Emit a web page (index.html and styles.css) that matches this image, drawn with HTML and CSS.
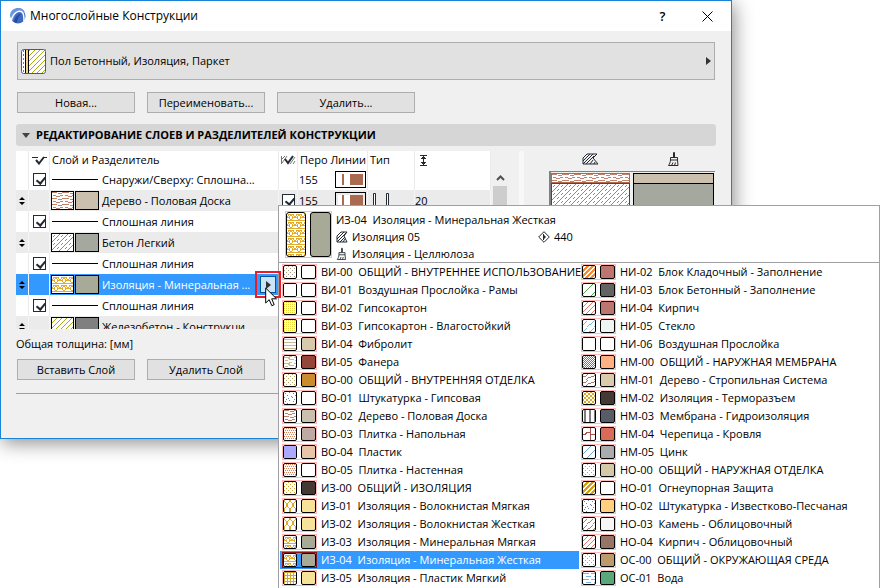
FILE: index.html
```html
<!DOCTYPE html>
<html lang="ru">
<head>
  <meta charset="UTF-8">
  <meta name="viewport" content="width=device-width, initial-scale=1.0">
  <title>Многослойные Конструкции</title>
  <link rel="stylesheet" href="styles.css">
</head>
<body>
  <!-- Штриховки и значки -->
  <svg class="defs" aria-hidden="true">
    <defs>
      <pattern id="dots-grey" width="4" height="4" patternUnits="userSpaceOnUse"><path d="M0 .5h1M2 2.5h1" stroke="#a39a8a"/></pattern>
      <pattern id="dots-yellow" width="2" height="2" patternUnits="userSpaceOnUse"><path d="M0 .5h1" stroke="#ecd83c"/></pattern>
      <pattern id="dots-tan" width="4" height="4" patternUnits="userSpaceOnUse"><path d="M0 .5h1M2 2.5h1" stroke="#b5a468"/></pattern>
      <pattern id="dots-orange" width="4" height="4" patternUnits="userSpaceOnUse"><path d="M0 .5h1M2 .5h1M1 2.5h1M3 2.5h1" stroke="#dd8058"/></pattern>
      <pattern id="dots-ochre" width="4" height="4" patternUnits="userSpaceOnUse"><path d="M0 .5h1M2 2.5h1" stroke="#cfa12a"/></pattern>
      <pattern id="sand-blue" width="8" height="8" patternUnits="userSpaceOnUse"><path d="M1 1.5h1M5 .5h1M3 3.5h1M7 4.5h1M0 5.5h1M4 6.5h1M2 7.5h1" stroke="#6a7fc0"/></pattern>
      <pattern id="lines-tan" width="4" height="3" patternUnits="userSpaceOnUse"><path d="M0 1.5h4" stroke="#c9bb93"/></pattern>
      <pattern id="ply" width="10" height="6" patternUnits="userSpaceOnUse"><path d="M0 1.5h4l2 2h4M6 .5h2M1 4.5h3M5 0v2" fill="none" stroke="#c9b98c"/></pattern>
      <pattern id="wood" width="12" height="6" patternUnits="userSpaceOnUse"><path d="M0 .5h5M6 1.5h4M10 .5h2M1 3.5h3M4 4.5h4M8 3.5h3" stroke="#c0826b"/></pattern>
      <pattern id="timber" width="8" height="6" patternUnits="userSpaceOnUse"><path d="M0 2.5h2l3-2M3 5.5l3-2h2" fill="none" stroke="#b07a5c"/></pattern>
      <pattern id="zigzag" width="6" height="10" patternUnits="userSpaceOnUse"><path d="M0 0l3 5 3-5M0 10l3-5 3 5" fill="none" stroke="#dba82a"/></pattern>
      <pattern id="batt" width="8" height="8" patternUnits="userSpaceOnUse"><path d="M0 4.5l2-3h4l2 3M0 7.5h8M2 4.5l2-3 2 3-2 3z" fill="none" stroke="#e2ab2c"/></pattern>
      <pattern id="grid-ochre" width="3" height="3" patternUnits="userSpaceOnUse"><path d="M0 .5h3M.5 0v3" stroke="#d6a72b"/></pattern>
      <pattern id="cross-ochre" width="4" height="4" patternUnits="userSpaceOnUse"><path d="M0 0l4 4M4 0l-4 4" stroke="#dba82a"/></pattern>
      <pattern id="check-maroon" width="2" height="2" patternUnits="userSpaceOnUse"><path d="M0 .5h1M1 1.5h1" stroke="#a86464"/></pattern>
      <pattern id="hatch-orange" width="5" height="5" patternUnits="userSpaceOnUse"><path d="M-1 6l7-7M-1 1l2-2M4 6l2-2" stroke="#f58a35" stroke-width="2"/></pattern>
      <pattern id="hatch-red" width="5" height="5" patternUnits="userSpaceOnUse"><path d="M-1 6l7-7M-1 1l2-2M4 6l2-2" stroke="#ec7468"/></pattern>
      <pattern id="hatch-ochre" width="5" height="5" patternUnits="userSpaceOnUse"><path d="M-1 6l7-7M-1 1l2-2M4 6l2-2" stroke="#d69d10" stroke-width="1.5"/></pattern>
      <pattern id="hatch-olive" width="5" height="5" patternUnits="userSpaceOnUse"><path d="M-1 6l7-7M-1 1l2-2M4 6l2-2" stroke="#a8aa10"/></pattern>
      <pattern id="hatch-green" width="10" height="10" patternUnits="userSpaceOnUse"><path d="M-1 11l12-12M-1 1l2-2M9 11l2-2" stroke="#4ba63f"/></pattern>
      <pattern id="hatch-blue" width="8" height="8" patternUnits="userSpaceOnUse"><path d="M-1 9l10-10M-1 1l2-2M7 9l2-2" stroke="#6aa8dc"/></pattern>
      <pattern id="dash-cyan" width="7" height="7" patternUnits="userSpaceOnUse"><path d="M0 5l4-4M4 7l3-3" stroke="#6fc3ea"/></pattern>
      <pattern id="dash-tan" width="6" height="6" patternUnits="userSpaceOnUse"><path d="M0 5l4-4M3 7l3-3" stroke="#a2875c"/></pattern>
      <pattern id="concrete" width="8" height="8" patternUnits="userSpaceOnUse"><path d="M0 8l8-8M1 3l2-2M5 7l2-2" stroke="#55b43e"/></pattern>
      <pattern id="bars-grey" width="5" height="8" patternUnits="userSpaceOnUse"><path d="M2 0v8" stroke="#7e7e7e" stroke-width="2"/></pattern>
      <pattern id="tile" width="12" height="12" patternUnits="userSpaceOnUse"><path d="M0 6.5h2l2-2h3l1 2h4M7.5 0v12" fill="none" stroke="#a84f4f"/></pattern>
      <pattern id="water" width="8" height="6" patternUnits="userSpaceOnUse"><path d="M0 1.5h6M3 4.5h5" stroke="#7ab2de"/></pattern>
      <pattern id="lilac" width="4" height="4" patternUnits="userSpaceOnUse"><path d="M0 0h4v4H0z" fill="#aaaaff"/></pattern>
      <pattern id="empty" width="4" height="4" patternUnits="userSpaceOnUse"><path d="M0 0h4v4H0z" fill="#fff"/></pattern>

      <symbol id="icon-hatch" viewBox="0 0 17 12">
        <path d="M1 11V5l4-4h10l-4 4 5 6z" fill="none" stroke="#222b33"/>
        <path d="M1 8l7-7M1 11L11 1M4 11l8-8M8 11l3-4M12 11l1-2" stroke="#222b33"/>
      </symbol>
      <symbol id="icon-brush" viewBox="0 0 12 15">
        <path d="M5.500 6V1.500h1V6M2.500 9V6.500h7V9zM2.500 9c0 2-1 4-2 5.500h9.500l-.5-5.500M3.500 14.500l1.500-3M6.500 14.500l1-3" fill="none" stroke="#222b33"/>
      </symbol>
      <symbol id="icon-sort" viewBox="0 0 6 8">
        <path d="M3 0l3 3H0zM3 8L0 5h6z"/>
      </symbol>
    </defs>
  </svg>

  <div class="stage">
    <!-- Диалог Start -->
    <section class="dialog">
      <header class="titlebar">
        <svg class="logo" width="16" height="16" viewBox="0 0 16 16">
          <circle cx="8" cy="8" r="7.500" fill="#3e69c4"/>
          <path d="M0 8a8 8 0 0 1 15-4c-5-3-10 0-12 9z" fill="#6d93df"/>
          <path d="M1 13C3 5 8 2 12 4c2 1 2 5 2 9" fill="none" stroke="#fff" stroke-width="1.500"/>
          <path d="M4 14c1-5 4-8 7-8-2 2-4 5-4 9z" fill="#244ba0"/>
        </svg>
        <h1>Многослойные Конструкции</h1>
        <button class="win-btn" type="button" aria-label="Справка">?</button>
        <button class="win-btn" type="button" aria-label="Закрыть">
          <svg width="11" height="11" viewBox="0 0 11 11"><path d="M.5.5l10 10M10.500.5l-10 10" stroke="#000"/></svg>
        </button>
      </header>

      <div class="dialog-body">
        <button class="composite" type="button">
          <svg width="25" height="25" viewBox="0 0 25 25">
            <rect width="25" height="25" rx="2" fill="#fff"/>
            <rect x="8" width="17" height="25" fill="url(#hatch-olive)"/>
            <path d="M2.500 1v23" stroke="#4aa336" stroke-dasharray="2 2"/>
            <path d="M4.500 1v23M7.500 1v23" stroke="#000"/>
            <path d="M6 1v23" stroke="#dfa41b"/>
            <rect x=".5" y=".5" width="24" height="24" rx="2" fill="none" stroke="#3b5a9c"/>
          </svg>
          <span>Пол Бетонный, Изоляция, Паркет</span>
          <svg class="arrow" width="5" height="8" viewBox="0 0 5 8"><path d="M0 0l5 4-5 4z" fill="#333"/></svg>
        </button>

        <div class="actions">
          <button class="push" type="button">Новая...</button>
          <button class="push" type="button">Переименовать...</button>
          <button class="push push-wide" type="button">Удалить...</button>
        </div>

        <h2 class="section">
          <svg width="8" height="5" viewBox="0 0 8 5"><path d="M0 0h8L4 5z" fill="#444"/></svg>
          Редактирование слоев и разделителей конструкции
        </h2>

        <div class="editor">
          <div class="layers">
            <table>
              <colgroup>
                <col class="c-sort"><col class="c-check"><col class="c-name"><col class="c-core"><col class="c-pen"><col class="c-type"><col>
              </colgroup>
              <thead>
                <tr>
                  <th></th>
                  <th class="mid"><svg width="15" height="9" viewBox="0 0 15 9"><path d="M0 1.500h6M12 1.500h3" stroke="#222b33"/><path d="M4 4l3 3.500L12 1" fill="none" stroke="#222b33" stroke-width="2"/></svg></th>
                  <th class="pad">Слой и Разделитель</th>
                  <th class="mid"><svg width="15" height="10" viewBox="0 0 15 10"><path d="M.5 9V1M1 8l5-7M9 9l5-7M12 9l2-3M1 4l3-3" stroke="#777"/><path d="M4 4l3 4 5-7" fill="none" stroke="#222b33" stroke-width="2"/></svg></th>
                  <th class="pad">Перо Линии</th>
                  <th class="pad">Тип</th>
                  <th class="thick"><svg width="7" height="11" viewBox="0 0 7 11"><path d="M0 .5h7M0 10.500h7M3.500 1v9M1 3.500h5M1 7.500h5M2 2.500h3M2 8.500h3" stroke="#222b33"/></svg></th>
                </tr>
              </thead>
              <tbody>
                <tr>
                  <td></td>
                  <td class="mid"><input type="checkbox" aria-label="Снаружи/Сверху" checked></td>
                  <td><div class="cell"><i class="rule"></i><span>Снаружи/Сверху: Сплошна...</span></div></td>
                  <td></td>
                  <td><div class="cell"><span class="pen">155</span><i class="pen-box"></i></div></td>
                  <td></td>
                  <td></td>
                </tr>
                <tr class="layer">
                  <td class="mid"><svg width="6" height="8"><use href="#icon-sort"/></svg></td>
                  <td></td>
                  <td><div class="cell"><svg class="fill"><rect width="100%" height="100%" fill="url(#wood)"/></svg><i class="surface" style="background:#cbbfae"></i><span>Дерево - Половая Доска</span></div></td>
                  <td class="mid"><input type="checkbox" aria-label="Дерево - Половая Доска" checked></td>
                  <td><div class="cell"><span class="pen">155</span><i class="pen-box"></i></div></td>
                  <td><svg class="type" width="17" height="15" viewBox="0 0 17 15"><path d="M.5.5h2v14h-2zM13.500.5h2v14h-2z" fill="#fff" stroke="#222b33"/></svg></td>
                  <td>20</td>
                </tr>
                <tr>
                  <td></td>
                  <td class="mid"><input type="checkbox" aria-label="Разделитель 1" checked></td>
                  <td><div class="cell"><i class="rule"></i><span>Сплошная линия</span></div></td>
                  <td></td><td></td><td></td><td></td>
                </tr>
                <tr class="layer">
                  <td class="mid"><svg width="6" height="8"><use href="#icon-sort"/></svg></td>
                  <td></td>
                  <td><div class="cell"><svg class="fill"><rect width="100%" height="100%" fill="url(#concrete)"/></svg><i class="surface" style="background:#a5a89f"></i><span>Бетон Легкий</span></div></td>
                  <td></td><td></td><td></td><td></td>
                </tr>
                <tr>
                  <td></td>
                  <td class="mid"><input type="checkbox" aria-label="Разделитель 2" checked></td>
                  <td><div class="cell"><i class="rule"></i><span>Сплошная линия</span></div></td>
                  <td></td><td></td><td></td><td></td>
                </tr>
                <tr class="layer selected">
                  <td class="mid"><svg width="6" height="8"><use href="#icon-sort"/></svg></td>
                  <td></td>
                  <td><div class="cell"><svg class="fill"><rect width="100%" height="100%" fill="url(#batt)"/></svg><i class="surface" style="background:#a8aa98"></i><span>Изоляция - Минеральная ...</span></div></td>
                  <td></td><td></td><td></td><td></td>
                </tr>
                <tr>
                  <td></td>
                  <td class="mid"><input type="checkbox" aria-label="Разделитель 3" checked></td>
                  <td><div class="cell"><i class="rule"></i><span>Сплошная линия</span></div></td>
                  <td></td><td></td><td></td><td></td>
                </tr>
                <tr class="layer">
                  <td class="mid"><svg width="6" height="8"><use href="#icon-sort"/></svg></td>
                  <td></td>
                  <td><div class="cell"><svg class="fill"><rect width="100%" height="100%" fill="url(#hatch-olive)"/></svg><i class="surface" style="background:#808080"></i><span>Железобетон - Конструкци...</span></div></td>
                  <td></td><td></td><td></td><td></td>
                </tr>
              </tbody>
            </table>
          </div>
          <div class="scrollbar">
            <svg width="9" height="6" viewBox="0 0 9 6"><path d="M1 5l3.500-3.500L8 5" fill="none" stroke="#505050" stroke-width="2"/></svg>
            <i class="thumb"></i>
          </div>
          <i class="splitter"></i>
          <div class="preview">
            <div class="preview-head">
              <svg width="17" height="12"><use href="#icon-hatch"/></svg>
              <svg width="12" height="15"><use href="#icon-brush"/></svg>
            </div>
            <div class="preview-view">
              <div class="cut">
                <svg class="wood"><rect width="100%" height="100%" fill="url(#wood)"/></svg>
                <svg class="concrete"><rect width="100%" height="100%" fill="url(#concrete)"/></svg>
              </div>
              <div class="faces"><i></i></div>
            </div>
          </div>
        </div>

        <p class="total">Общая толщина: [мм]</p>
        <div class="actions actions-layer">
          <button class="push" type="button">Вставить Слой</button>
          <button class="push" type="button">Удалить Слой</button>
        </div>
        <hr>
      </div>
    </section>
    <!-- Диалог End -->

    <!-- Список материалов Start -->
    <section class="popup">
      <header class="popup-head">
        <div class="pair pair-big">
          <svg class="fill"><rect width="100%" height="100%" fill="url(#batt)"/></svg>
          <i class="surface" style="background:#a8aa98"></i>
        </div>
        <div class="info">
          <p class="code">ИЗ-04  Изоляция - Минеральная Жесткая</p>
          <p><svg width="12" height="12" viewBox="0 0 12 12"><path d="M1 11V5l4-4h6L8 5l3 6zM1 8l7-7M1 11L10 2M4 11l5-5M7 11l2-3" fill="none" stroke="#222b33"/></svg>Изоляция 05</p>
          <p><svg width="12" height="13"><use href="#icon-brush"/></svg>Изоляция - Целлюлоза</p>
        </div>
        <p class="priority">
          <svg width="12" height="12" viewBox="0 0 12 12"><path d="M6 .7L11.300 6 6 11.300.7 6z" fill="none" stroke="#222b33"/><path d="M5.500 3v6" stroke="#222b33"/><path d="M6 4l2 2-2 2z" fill="#222b33"/></svg>440
        </p>
      </header>
      <ul id="materials" class="materials"></ul>
    </section>
    <!-- Список материалов End -->

    <!-- Кнопка выбора материала и указатель -->
    <div class="mark">
      <button class="pick" type="button" aria-label="Выбрать материал">
        <svg width="5" height="8" viewBox="0 0 5 8"><path d="M0 0l5 4-5 4z" fill="#333"/></svg>
      </button>
    </div>
    <svg class="cursor" width="13" height="20" viewBox="0 0 13 20"><path d="M.7 1v15l3.500-3.300 2.600 6 2.400-1-2.500-5.900h4.800z" fill="#fff" stroke="#000"/></svg>
  </div>

  <script>
  // код и название, штриховка, цвет поверхности
  const materials = [
    ['ВИ-00  ОБЩИЙ - ВНУТРЕННЕЕ ИСПОЛЬЗОВАНИЕ', 'dots-grey', '#fff'],
    ['ВИ-01  Воздушная Прослойка - Рамы', 'empty', '#fff'],
    ['ВИ-02  Гипсокартон', 'dots-yellow', '#fff'],
    ['ВИ-03  Гипсокартон - Влагостойкий', 'dots-yellow', '#fff'],
    ['ВИ-04  Фибролит', 'lines-tan', '#d8c9ab'],
    ['ВИ-05  Фанера', 'ply', '#96453a'],
    ['ВО-00  ОБЩИЙ - ВНУТРЕННЯЯ ОТДЕЛКА', 'dots-tan', '#cb8c2e'],
    ['ВО-01  Штукатурка - Гипсовая', 'sand-blue', '#fff'],
    ['ВО-02  Дерево - Половая Доска', 'wood', '#cbbfae'],
    ['ВО-03  Плитка - Напольная', 'dots-orange', '#bfaaa3'],
    ['ВО-04  Пластик', 'lilac', '#e6c6a6'],
    ['ВО-05  Плитка - Настенная', 'dots-orange', '#fff'],
    ['ИЗ-00  ОБЩИЙ - ИЗОЛЯЦИЯ', 'dots-ochre', '#453935'],
    ['ИЗ-01  Изоляция - Волокнистая Мягкая', 'zigzag', '#f7e29a'],
    ['ИЗ-02  Изоляция - Волокнистая Жесткая', 'zigzag', '#f7e29a'],
    ['ИЗ-03  Изоляция - Минеральная Мягкая', 'batt', '#a8aa98'],
    ['ИЗ-04  Изоляция - Минеральная Жесткая', 'batt', '#a8aa98'],
    ['ИЗ-05  Изоляция - Пластик Мягкий', 'grid-ochre', '#f7e29a'],
    ['НИ-02  Блок Кладочный - Заполнение', 'hatch-orange', '#bd766f'],
    ['НИ-03  Блок Бетонный - Заполнение', 'hatch-green', '#636363'],
    ['НИ-04  Кирпич', 'hatch-red', '#bd766f'],
    ['НИ-05  Стекло', 'dash-cyan', '#eef5f3'],
    ['НИ-06  Воздушная Прослойка', 'empty', '#fff'],
    ['НМ-00  ОБЩИЙ - НАРУЖНАЯ МЕМБРАНА', 'check-maroon', '#ffb184'],
    ['НМ-01  Дерево - Стропильная Система', 'timber', '#d9cbab'],
    ['НМ-02  Изоляция - Терморазъем', 'cross-ochre', '#453935'],
    ['НМ-03  Мембрана - Гидроизоляция', 'bars-grey', '#575c66'],
    ['НМ-04  Черепица - Кровля', 'tile', '#da6b58'],
    ['НМ-05  Цинк', 'hatch-blue', '#aaabad'],
    ['НО-00  ОБЩИЙ - НАРУЖНАЯ ОТДЕЛКА', 'dots-tan', '#d3c8a8'],
    ['НО-01  Огнеупорная Защита', 'hatch-ochre', '#fff'],
    ['НО-02  Штукатурка - Известково-Песчаная', 'sand-blue', '#ffd080'],
    ['НО-03  Камень - Облицовочный', 'dash-tan', '#f6f6f6'],
    ['НО-04  Кирпич - Облицовочный', 'hatch-red', '#967566'],
    ['ОС-00  ОБЩИЙ - ОКРУЖАЮЩАЯ СРЕДА', 'dots-tan', '#bb9b6c'],
    ['ОС-01  Вода', 'water', '#58a87a']
  ]
  const current = 'ИЗ-04'

  document.querySelector('#materials').innerHTML = materials.map(([name, fill, color]) => `
    <li>
      <button type="button" class="material${name.startsWith(current) ? ' active' : ''}">
        <span class="pair">
          <svg class="fill"><rect width="100%" height="100%" fill="url(#${fill})"/></svg>
          <i class="surface" style="background:${color}"></i>
        </span>
        <span class="code">${name}</span>
      </button>
    </li>`).join('')
  </script>
</body>
</html>
```

FILE: styles.css
```css
* {
    box-sizing: border-box;
}

body {
    margin: 0;
    background: #fff;
    color: #000;
    font: 11px/16px "Open Sans", "Noto Sans", sans-serif;
}

h1, h2, p, ul {
    margin: 0;
    padding: 0;
    font-size: 11px;
    font-weight: normal;
}

button {
    padding: 0;
    font: inherit;
    color: inherit;
}

svg, i {
    display: block;
    flex: none;
}

pattern {
    shape-rendering: crispEdges;
}

.defs {
    position: absolute;
    width: 0;
    height: 0;
}

.stage {
    position: relative;
    min-height: 100vh;
    padding-right: 148px;
    overflow: hidden;
}

/* Диалог */
.dialog {
    border: 1px solid #1883d7;
    background: #f0f0f0;
    box-shadow: 2px 4px 18px rgba(0, 0, 0, 0.45);
}

.titlebar {
    display: flex;
    align-items: center;
    height: 30px;
    padding: 0 1px 0 9px;
    background: #fff;
}

.titlebar h1 {
    flex: 1;
    padding-left: 4px;
    font-size: 12px;
}

.win-btn {
    display: flex;
    align-items: center;
    justify-content: center;
    width: 45px;
    height: 29px;
    border: 0;
    background: none;
    font-size: 13px;
    font-weight: 600;
}

.dialog-body {
    padding: 11px 15px 44px;
}

.composite {
    display: flex;
    align-items: center;
    gap: 4px;
    width: calc(100% - 2px);
    height: 38px;
    margin-left: 1px;
    padding: 0 3px;
    border: 1px solid #adadad;
    background: #e1e1e1;
}

.composite .arrow {
    margin-left: auto;
}

.actions {
    display: flex;
    gap: 12px;
    margin: 12px 0 0 1px;
}

.push {
    width: 118px;
    height: 21px;
    border: 1px solid #adadad;
    background: #e1e1e1;
    line-height: 18px;
}

.push-wide {
    width: 138px;
}

.section {
    display: flex;
    align-items: center;
    gap: 6px;
    height: 22px;
    margin-top: 11px;
    padding-left: 6px;
    border-radius: 3px;
    background: #d6d6d6;
    font-weight: bold;
    text-transform: uppercase;
}

/* Таблица слоев */
.editor {
    display: flex;
    height: 178px;
    margin-top: 5px;
}

.layers {
    width: 475px;
    overflow: hidden;
    background: #fff;
}

.layers table {
    width: 100%;
    table-layout: fixed;
    border-collapse: separate;
    border-spacing: 0;
}

.c-sort { width: 13px; }
.c-check { width: 21px; }
.c-name { width: 229px; }
.c-core { width: 19px; }
.c-pen { width: 70px; }
.c-type { width: 47px; }

.layers th,
.layers td {
    height: 21px;
    padding: 0;
    border-right: 1px solid #ebebeb;
    font-weight: normal;
    text-align: left;
    white-space: nowrap;
}

.layers th {
    height: 18px;
}

.layers .pad {
    padding-left: 2px;
}

.layers .thick {
    padding-left: 5px;
}

.layers .mid svg,
.layers .mid input {
    margin: 0 auto;
}

.layers .layer {
    background: #ebebeb;
}

.layers .layer td {
    border-color: #f5f5f5;
}

.layers .selected {
    background: #3399ff;
    color: #fff;
}

.cell {
    display: flex;
    align-items: center;
    height: 21px;
    padding-left: 1px;
}

.layers input {
    display: block;
    position: relative;
    appearance: none;
    width: 13px;
    height: 13px;
    border: 1px solid #222b33;
    background: #fff;
}

.layers input:checked::after {
    content: "";
    position: absolute;
    left: 4px;
    top: 1px;
    width: 4px;
    height: 7px;
    border: solid #222b33;
    border-width: 0 2px 2px 0;
    transform: rotate(40deg);
}

.rule {
    width: 46px;
    height: 1px;
    margin: 0 4px 0 1px;
    background: #000;
}

.fill,
.surface {
    border: 1px solid #000;
    background: #fff;
}

.cell .fill {
    width: 23px;
    height: 19px;
    margin-right: 1px;
}

.cell .surface {
    width: 24px;
    height: 19px;
    margin-right: 3px;
}

.pen {
    width: 36px;
}

.pen-box {
    width: 31px;
    height: 17px;
    padding: 2px;
    border: 1px solid #000;
    background: linear-gradient(90deg, transparent 4px, #a96a50 4px, #a96a50 6px, transparent 6px, transparent 12px, #a96a50 12px) content-box #fff;
}

.type {
    margin-left: 5px;
}

.scrollbar {
    width: 17px;
    padding: 24px 1px 0 2px;
}

.scrollbar svg {
    margin: 0 auto 5px 3px;
}

.thumb {
    height: 100px;
    background: #cdcdcd;
}

.splitter {
    width: 5px;
    margin-left: 11px;
    background: #f8f8f8;
}

/* Просмотр */
.preview {
    flex: 1;
    display: flex;
    flex-direction: column;
    padding: 0 1px 0 25px;
}

.preview-head {
    display: grid;
    grid-template-columns: 1fr 1fr;
    align-items: center;
    justify-items: center;
    height: 16px;
    margin-bottom: 5px;
}

.preview-view {
    flex: 1;
    display: flex;
    gap: 3px;
    padding: 1px 1px 0 0;
    border: solid #808080;
    border-width: 1px 0 0 2px;
}

.cut,
.faces {
    flex: 1;
    background: #fff;
}

.cut svg {
    width: 100%;
    border: 1px solid #b3674c;
}

.cut .wood {
    height: 10px;
}

.cut .concrete {
    height: 150px;
    border-color: #17692a;
}

.faces {
    border: 1px solid #000;
    background: #a5a89f;
}

.faces i {
    height: 10px;
    border-bottom: 1px solid #000;
    background: #cbbfae;
}

.total {
    margin-top: 7px;
}

.actions-layer {
    margin-top: 7px;
}

hr {
    height: 1px;
    margin: 13px 0 0;
    border: 0;
    background: #a0a0a0;
}

/* Список материалов */
.popup {
    position: absolute;
    left: 278px;
    right: 0;
    top: 205px;
    border: 1px solid #a0a0a4;
    border-bottom: 0;
    background: #fff;
}

.popup-head {
    display: flex;
    height: 57px;
    padding: 5px 6px 0;
    border-bottom: 1px solid #a0a0a4;
}

.pair {
    display: flex;
    flex: none;
    justify-content: space-between;
    width: 35px;
    height: 16px;
    border: 1px solid #ffb9b9;
}

.pair .fill,
.pair .surface {
    width: 14px;
    height: 14px;
    border-radius: 2px;
}

.pair .surface {
    width: 15px;
}

.pair-big {
    width: 47px;
    height: 47px;
}

.pair-big .fill,
.pair-big .surface {
    width: 20px;
    height: 45px;
    border-radius: 3px;
}

.pair-big .surface {
    width: 21px;
}

.info {
    width: 206px;
    padding-left: 4px;
    line-height: 17px;
}

.info p,
.priority {
    display: flex;
    align-items: center;
    gap: 4px;
    white-space: nowrap;
}

.priority {
    height: 17px;
    margin-top: 17px;
}

.code,
.info .code {
    white-space: pre;
}

.materials {
    display: grid;
    grid-template-columns: 299px 1fr;
    grid-template-rows: repeat(18, 18px);
    grid-auto-flow: column;
    padding: 0 1px 1px;
    list-style: none;
}

.material {
    display: flex;
    align-items: center;
    gap: 4px;
    width: 100%;
    height: 18px;
    padding-left: 2px;
    border: 0;
    background: none;
    line-height: 16px;
}

.material.active {
    background: #3399ff;
    color: #fff;
}

.active .pair {
    border-color: #8b1414;
}

/* Кнопка выбора и указатель */
.mark {
    position: absolute;
    left: 255px;
    top: 271px;
    width: 26px;
    height: 27px;
    padding: 3px;
    border: 2px solid #ed1c24;
}

.pick {
    display: flex;
    align-items: center;
    justify-content: center;
    width: 16px;
    height: 17px;
    border: 1px solid #005499;
    background: #cce4f7;
}

.cursor {
    position: absolute;
    left: 265px;
    top: 287px;
}
```
